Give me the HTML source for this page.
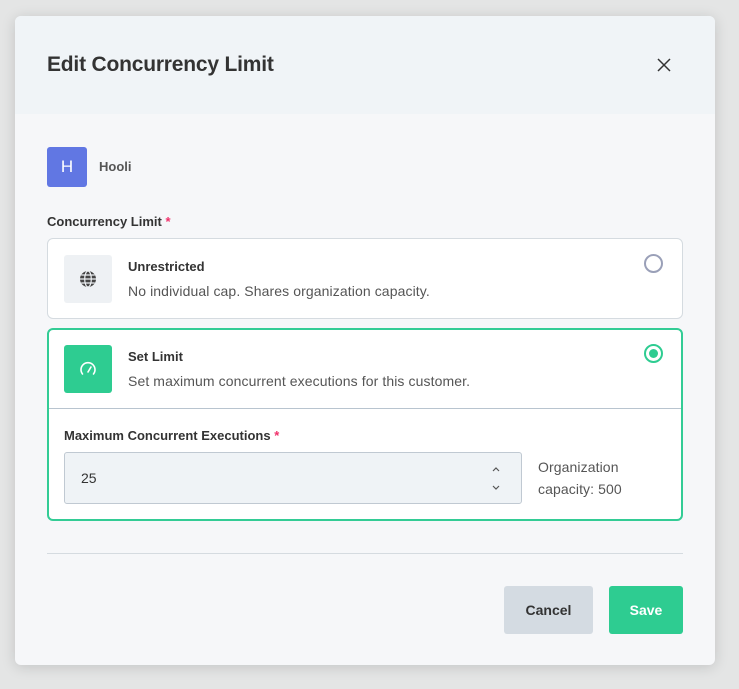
<!DOCTYPE html>
<html><head><meta charset="utf-8"><style>
*{box-sizing:border-box;margin:0;padding:0}
body{width:739px;height:689px;background:#e4e5e5;font-family:"Liberation Sans",sans-serif;position:relative;overflow:hidden}
.a{position:absolute}
.modal{left:15px;top:16px;width:700px;height:649px;background:#f6f7f9;border-radius:6px;overflow:hidden;box-shadow:0 2px 14px rgba(0,0,0,.15)}
.hdr{left:0;top:0;width:700px;height:98px;background:#f0f4f7}
.t{font-size:13px;color:#333;font-weight:bold;line-height:16px}
.d{font-size:14px;color:#555;line-height:16px;letter-spacing:0.1px}
.card{background:#fff;border-radius:6px}
.radio{width:19px;height:19px;border-radius:50%}
</style></head><body>
<div class="a modal">
 <div class="a hdr"></div>
 <div class="a" style="left:32px;top:37px;font-size:21px;font-weight:bold;color:#333;letter-spacing:-0.2px">Edit Concurrency Limit</div>
 <svg class="a" style="left:642px;top:42px" width="14" height="14" viewBox="0 0 14 14"><path d="M1 1L13 13M13 1L1 13" stroke="#333" stroke-width="1.5"/></svg>
 <div class="a" style="left:32px;top:131px;width:40px;height:40px;background:#6177e3;border-radius:3px;color:#fff;font-size:17px;text-align:center;line-height:40px">H</div>
 <div class="a t" style="left:84px;top:143px;color:#555">Hooli</div>
 <div class="a t" style="left:32px;top:198px">Concurrency Limit <span style="color:#f0306a">*</span></div>
 <div class="a card" style="left:32px;top:222px;width:636px;height:81px;border:1px solid #d5dbe0"></div>
 <div class="a" style="left:49px;top:239px;width:48px;height:48px;background:#eef1f4;border-radius:3px"></div>
 <svg class="a" style="left:64px;top:254px" width="18" height="18" viewBox="0 0 18 18"><circle cx="9" cy="9" r="8" fill="#444"/><g stroke="#eef1f4" stroke-width="1.2" fill="none"><ellipse cx="9" cy="9" rx="3.3" ry="8"/><path d="M1 9H17M2.2 5H15.8M2.2 13H15.8"/></g></svg>
 <div class="a t" style="left:113px;top:243px">Unrestricted</div>
 <div class="a d" style="left:113px;top:267px">No individual cap. Shares organization capacity.</div>
 <div class="a radio" style="left:629px;top:238px;border:2px solid #9aa0b8;background:#fff"></div>
 <div class="a card" style="left:32px;top:312px;width:636px;height:193px;border:2px solid #33cc95"></div>
 <div class="a" style="left:34px;top:392px;width:632px;height:1px;background:#b8c4cf"></div>
 <div class="a" style="left:49px;top:329px;width:48px;height:48px;background:#2ecc91;border-radius:3px"></div>
 <svg class="a" style="left:63px;top:343px" width="20" height="20" viewBox="0 0 20 20"><g stroke="#fff" stroke-width="1.6" fill="none" stroke-linecap="round"><path d="M4.5 15A7 7 0 1 1 15.5 15"/><path d="M10 13L13 8"/></g></svg>
 <div class="a t" style="left:113px;top:333px">Set Limit</div>
 <div class="a d" style="left:113px;top:357px">Set maximum concurrent executions for this customer.</div>
 <div class="a radio" style="left:629px;top:328px;border:2px solid #2ecc91;background:#fff"></div>
 <div class="a" style="left:634px;top:333px;width:9px;height:9px;border-radius:50%;background:#2ecc91"></div>
 <div class="a t" style="left:49px;top:412px">Maximum Concurrent Executions <span style="color:#f0306a">*</span></div>
 <div class="a" style="left:49px;top:436px;width:458px;height:52px;background:#eff3f6;border:1px solid #c0c9d2;border-radius:3px"></div>
 <div class="a" style="left:66px;top:454px;font-size:14px;color:#333">25</div>
 <svg class="a" style="left:475px;top:449px" width="12" height="28" viewBox="0 0 12 28"><path d="M3 6L6 3L9 6M3 21L6 24L9 21" stroke="#555" stroke-width="1.2" fill="none"/></svg>
 <div class="a d" style="left:523px;top:440px;line-height:22px">Organization<br>capacity: 500</div>
 <div class="a" style="left:32px;top:537px;width:636px;height:1px;background:#d5dbe0"></div>
 <div class="a" style="left:489px;top:570px;width:89px;height:48px;background:#d4dbe2;border-radius:3px;text-align:center;line-height:48px;font-size:14px;font-weight:bold;color:#333">Cancel</div>
 <div class="a" style="left:594px;top:570px;width:74px;height:48px;background:#2ecc91;border-radius:3px;text-align:center;line-height:48px;font-size:14px;font-weight:bold;color:#fff">Save</div>
</div>
</body></html>
